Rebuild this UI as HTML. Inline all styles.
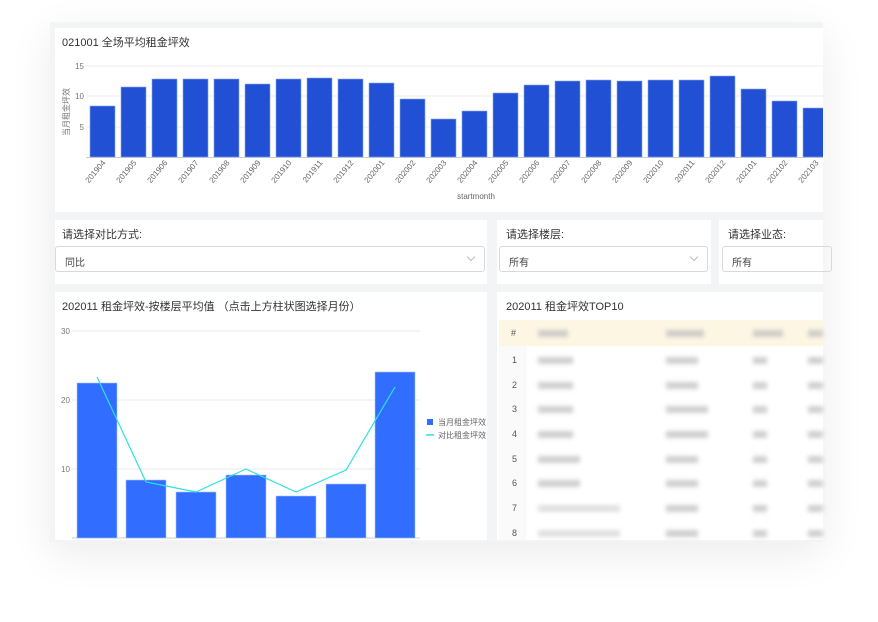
<!DOCTYPE html>
<html><head><meta charset="utf-8"><style>
*{margin:0;padding:0;box-sizing:border-box}
body{width:878px;height:622px;background:#fff;position:relative;overflow:hidden;font-family:"Liberation Sans","Noto Sans CJK SC",sans-serif}
.wrap{position:absolute;left:50px;top:22px;width:773px;height:520px;background:#f3f4f5;box-shadow:0 12px 40px rgba(0,0,0,0.08);overflow:hidden}
.p{position:absolute;background:#fff}
.t{position:absolute;font-size:11px;color:#333}
.sel{position:absolute;height:26px;border:1px solid #d9d9d9;border-radius:3px;font-size:10px;color:#444;padding:7px 9px}
.sel i{position:absolute;right:10px;top:7px;width:6px;height:6px;border-right:1px solid #bbb;border-bottom:1px solid #bbb;transform:rotate(45deg)}
.blur{position:absolute;height:7px;background:#bbb;filter:blur(2px);opacity:.7}
.num{position:absolute;font-size:9px;color:#555}
</style></head><body>
<div class="wrap"></div>
<div class="p" style="left:55px;top:28px;width:768px;height:184px"></div>
<div class="t" style="left:62px;top:34px">021001 全场平均租金坪效</div>
<div class="p" style="left:55px;top:220px;width:432px;height:64px"></div>
<div class="t" style="left:62px;top:226px">请选择对比方式:</div>
<div class="sel" style="left:55px;top:246px;width:430px">同比<i></i></div>
<div class="p" style="left:497px;top:220px;width:214px;height:64px"></div>
<div class="t" style="left:506px;top:226px">请选择楼层:</div>
<div class="sel" style="left:499px;top:246px;width:209px">所有<i></i></div>
<div class="p" style="left:719px;top:220px;width:104px;height:64px"></div>
<div class="t" style="left:728px;top:226px">请选择业态:</div>
<div class="sel" style="left:722px;top:246px;width:110px">所有</div>
<div class="p" style="left:55px;top:292px;width:432px;height:248px"></div>
<div class="t" style="left:62px;top:298px">202011 租金坪效-按楼层平均值 （点击上方柱状图选择月份）</div>
<div class="p" style="left:497px;top:292px;width:326px;height:248px"></div>
<div class="t" style="left:506px;top:298px">202011 租金坪效TOP10</div>
<div style="position:absolute;left:499px;top:320px;width:324px;height:26px;background:#fdf6e3"></div>
<div class="num" style="left:511px;top:328px">#</div>
<div class="blur" style="left:538px;top:330px;width:30px"></div>
<div class="blur" style="left:666px;top:330px;width:38px"></div>
<div class="blur" style="left:753px;top:330px;width:30px"></div>
<div class="blur" style="left:808px;top:330px;width:15px"></div>
<div style="position:absolute;left:499px;top:346px;width:28px;height:194px;background:#fafafa"></div>

<div class="num" style="left:512px;top:355px">1</div><div class="blur" style="left:538px;top:357px;width:35px"></div><div class="blur" style="left:666px;top:357px;width:32px"></div><div class="blur" style="left:753px;top:357px;width:14px"></div><div class="blur" style="left:808px;top:357px;width:15px"></div>
<div class="num" style="left:512px;top:380px">2</div><div class="blur" style="left:538px;top:382px;width:35px"></div><div class="blur" style="left:666px;top:382px;width:32px"></div><div class="blur" style="left:753px;top:382px;width:14px"></div><div class="blur" style="left:808px;top:382px;width:15px"></div>
<div class="num" style="left:512px;top:404px">3</div><div class="blur" style="left:538px;top:406px;width:35px"></div><div class="blur" style="left:666px;top:406px;width:42px"></div><div class="blur" style="left:753px;top:406px;width:14px"></div><div class="blur" style="left:808px;top:406px;width:15px"></div>
<div class="num" style="left:512px;top:429px">4</div><div class="blur" style="left:538px;top:431px;width:35px"></div><div class="blur" style="left:666px;top:431px;width:42px"></div><div class="blur" style="left:753px;top:431px;width:14px"></div><div class="blur" style="left:808px;top:431px;width:15px"></div>
<div class="num" style="left:512px;top:454px">5</div><div class="blur" style="left:538px;top:456px;width:42px"></div><div class="blur" style="left:666px;top:456px;width:32px"></div><div class="blur" style="left:753px;top:456px;width:14px"></div><div class="blur" style="left:808px;top:456px;width:15px"></div>
<div class="num" style="left:512px;top:478px">6</div><div class="blur" style="left:538px;top:480px;width:42px"></div><div class="blur" style="left:666px;top:480px;width:32px"></div><div class="blur" style="left:753px;top:480px;width:14px"></div><div class="blur" style="left:808px;top:480px;width:15px"></div>
<div class="num" style="left:512px;top:503px">7</div><div class="blur" style="left:538px;top:505px;width:82px;opacity:.45"></div><div class="blur" style="left:666px;top:505px;width:32px"></div><div class="blur" style="left:753px;top:505px;width:14px"></div><div class="blur" style="left:808px;top:505px;width:15px"></div>
<div class="num" style="left:512px;top:528px">8</div><div class="blur" style="left:538px;top:530px;width:82px;opacity:.45"></div><div class="blur" style="left:666px;top:530px;width:32px"></div><div class="blur" style="left:753px;top:530px;width:14px"></div><div class="blur" style="left:808px;top:530px;width:15px"></div>

<svg width="878" height="622" style="position:absolute;left:0;top:0" font-family="Liberation Sans, Noto Sans CJK SC, sans-serif">
<defs><clipPath id="c1"><rect x="55" y="28" width="768" height="184"/></clipPath></defs>
<g clip-path="url(#c1)">
<g stroke="#eee"><line x1="86" y1="66" x2="823" y2="66"/><line x1="86" y1="96" x2="823" y2="96"/><line x1="86" y1="127" x2="823" y2="127"/></g>
<line x1="86" y1="157.5" x2="823" y2="157.5" stroke="#ccc"/>
<g font-size="8" fill="#777" text-anchor="end"><text x="84" y="69">15</text><text x="84" y="99">10</text><text x="84" y="130">5</text></g>
<text transform="translate(69,112) rotate(-90)" font-size="8" fill="#777" text-anchor="middle">当月租金坪效</text>
<g fill="#2150d4" stroke="#8aa4f0" stroke-width="0.6">
<rect x="90" y="106" width="25" height="51"/><rect x="121" y="87" width="25" height="70"/><rect x="152" y="79" width="25" height="78"/><rect x="183" y="79" width="25" height="78"/><rect x="214" y="79" width="25" height="78"/><rect x="245" y="84" width="25" height="73"/><rect x="276" y="79" width="25" height="78"/><rect x="307" y="78" width="25" height="79"/><rect x="338" y="79" width="25" height="78"/><rect x="369" y="83" width="25" height="74"/><rect x="400" y="99" width="25" height="58"/><rect x="431" y="119" width="25" height="38"/><rect x="462" y="111" width="25" height="46"/><rect x="493" y="93" width="25" height="64"/><rect x="524" y="85" width="25" height="72"/><rect x="555" y="81" width="25" height="76"/><rect x="586" y="80" width="25" height="77"/><rect x="617" y="81" width="25" height="76"/><rect x="648" y="80" width="25" height="77"/><rect x="679" y="80" width="25" height="77"/><rect x="710" y="76" width="25" height="81"/><rect x="741" y="89" width="25" height="68"/><rect x="772" y="101" width="25" height="56"/><rect x="803" y="108" width="25" height="49"/>
</g>
<g font-size="8" fill="#666" text-anchor="end">
<text transform="translate(106,163) rotate(-50)">201904</text><text transform="translate(137,163) rotate(-50)">201905</text><text transform="translate(168,163) rotate(-50)">201906</text><text transform="translate(199,163) rotate(-50)">201907</text><text transform="translate(230,163) rotate(-50)">201908</text><text transform="translate(261,163) rotate(-50)">201909</text><text transform="translate(292,163) rotate(-50)">201910</text><text transform="translate(323,163) rotate(-50)">201911</text><text transform="translate(354,163) rotate(-50)">201912</text><text transform="translate(385,163) rotate(-50)">202001</text><text transform="translate(416,163) rotate(-50)">202002</text><text transform="translate(447,163) rotate(-50)">202003</text><text transform="translate(478,163) rotate(-50)">202004</text><text transform="translate(509,163) rotate(-50)">202005</text><text transform="translate(540,163) rotate(-50)">202006</text><text transform="translate(571,163) rotate(-50)">202007</text><text transform="translate(602,163) rotate(-50)">202008</text><text transform="translate(633,163) rotate(-50)">202009</text><text transform="translate(664,163) rotate(-50)">202010</text><text transform="translate(695,163) rotate(-50)">202011</text><text transform="translate(726,163) rotate(-50)">202012</text><text transform="translate(757,163) rotate(-50)">202101</text><text transform="translate(788,163) rotate(-50)">202102</text><text transform="translate(819,163) rotate(-50)">202103</text>
</g>
<text x="476" y="199" font-size="8" fill="#666" text-anchor="middle">startmonth</text>
</g>
<g stroke="#e8e8e8"><line x1="72" y1="331" x2="420" y2="331"/><line x1="72" y1="400" x2="420" y2="400"/><line x1="72" y1="469" x2="420" y2="469"/></g>
<line x1="72" y1="538" x2="420" y2="538" stroke="#ccc"/>
<g font-size="8" fill="#777"><text x="61" y="334">30</text><text x="61" y="403">20</text><text x="61" y="472">10</text></g>
<g fill="#316dfe" stroke="#a8c0ff" stroke-width="0.6">
<rect x="77" y="383" width="40" height="155"/><rect x="126" y="480" width="40" height="58"/><rect x="176" y="492" width="40" height="46"/><rect x="226" y="475" width="40" height="63"/><rect x="276" y="496" width="40" height="42"/><rect x="326" y="484" width="40" height="54"/><rect x="375" y="372" width="40" height="166"/>
</g>
<polyline points="97,377 146,482 196,492 246,469 296,492 346,470 395,387" fill="none" stroke="#2fe0e0" stroke-width="1.2"/>
<rect x="427" y="419" width="6" height="6" fill="#316dfe"/>
<text x="438" y="425" font-size="8" fill="#666">当月租金坪效</text>
<line x1="426" y1="435" x2="434" y2="435" stroke="#2fe0e0" stroke-width="1.5"/>
<text x="438" y="438" font-size="8" fill="#666">对比租金坪效</text>
</svg>
</body></html>
